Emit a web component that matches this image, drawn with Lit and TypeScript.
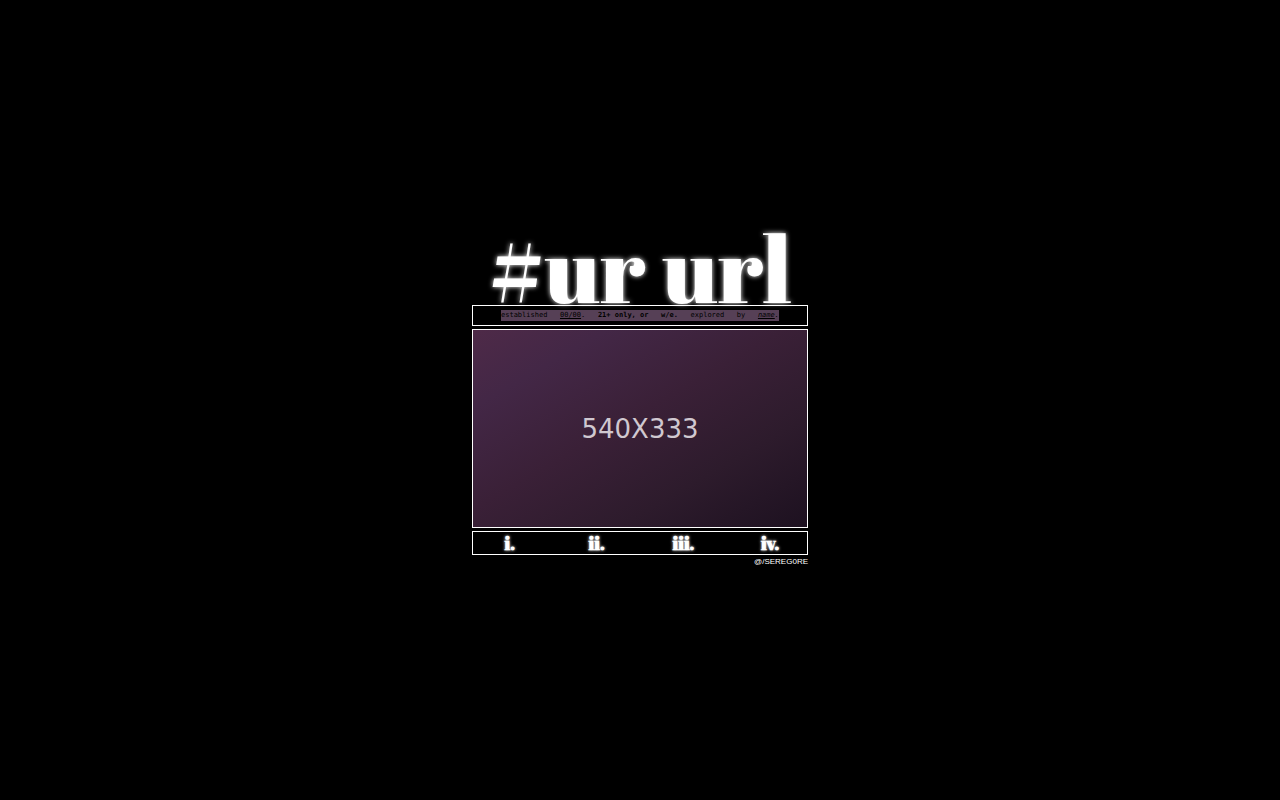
import { LitElement, html, css } from "lit";
import { customElement } from "lit/decorators.js";

@customElement("app-root")
export class AppRoot extends LitElement {
  static styles = css`
    :host {
      display: flex;
      align-items: center;
      justify-content: center;
      min-height: 100vh;
      background: #000;
      color: #fff;
    }
    * {
      box-sizing: border-box;
    }
    a {
      color: inherit;
      text-decoration: none;
    }
    .card {
      width: 336px;
      max-width: 100%;
      display: flex;
      flex-direction: column;
    }
    .title {
      margin: 0;
      padding-bottom: 1px;
      font: 400 92px/72px "Abril Fatface", "Liberation Serif", serif;
      text-align: center;
      white-space: nowrap;
      text-shadow: 0 0 5px #fff;
    }
    .bar {
      border: 1px solid #fff;
      padding: 4px 28px;
    }
    .facts {
      margin: 0;
      display: flex;
      justify-content: space-between;
      background: #564056;
      color: #000;
      font: 7px/11px "DejaVu Sans Mono", monospace;
      white-space: nowrap;
    }
    .facts a,
    .facts u {
      text-decoration: underline;
    }
    .art {
      margin: 3px 0;
      border: 1px solid #fff;
      aspect-ratio: 336 / 199;
      display: flex;
      align-items: center;
      justify-content: center;
      background: linear-gradient(150deg, #4e2a48 0%, #432746 20%, #3a2037 46%, #2d1b2c 72%, #1d1120 100%);
      color: #d0c8d0;
      font: 26px/30px "DejaVu Sans", sans-serif;
    }
    .links {
      border: 1px solid #fff;
      display: grid;
      grid-template-columns: repeat(4, 26%);
      justify-content: center;
      text-align: center;
      font: 700 18px/22px "Abril Fatface", "Liberation Serif", serif;
      text-shadow: 0 0 3px #fff;
    }
    .credit {
      align-self: flex-end;
      margin-top: 1px;
      font: 8px/12px "Liberation Sans", Arial, sans-serif;
    }
  `;

  render() {
    return html`
      <main class="card">
        <h1 class="title">#ur url</h1>
        <div class="bar">
          <p class="facts">
            <span>established</span>
            <span><u>00/00</u>.</span>
            <b>21+ only, or</b>
            <b>w/e.</b>
            <span>explored</span>
            <span>by</span>
            <i><a href="#name">name</a>.</i>
          </p>
        </div>
        <div class="art" role="img" aria-label="540X333">540X333</div>
        <nav class="links">
          ${["i.", "ii.", "iii.", "iv."].map(
            (label) => html`<a href="#${label.slice(0, -1)}">${label}</a>`
          )}
        </nav>
        <a class="credit" href="#credit">@/SEREG0RE</a>
      </main>
    `;
  }
}
